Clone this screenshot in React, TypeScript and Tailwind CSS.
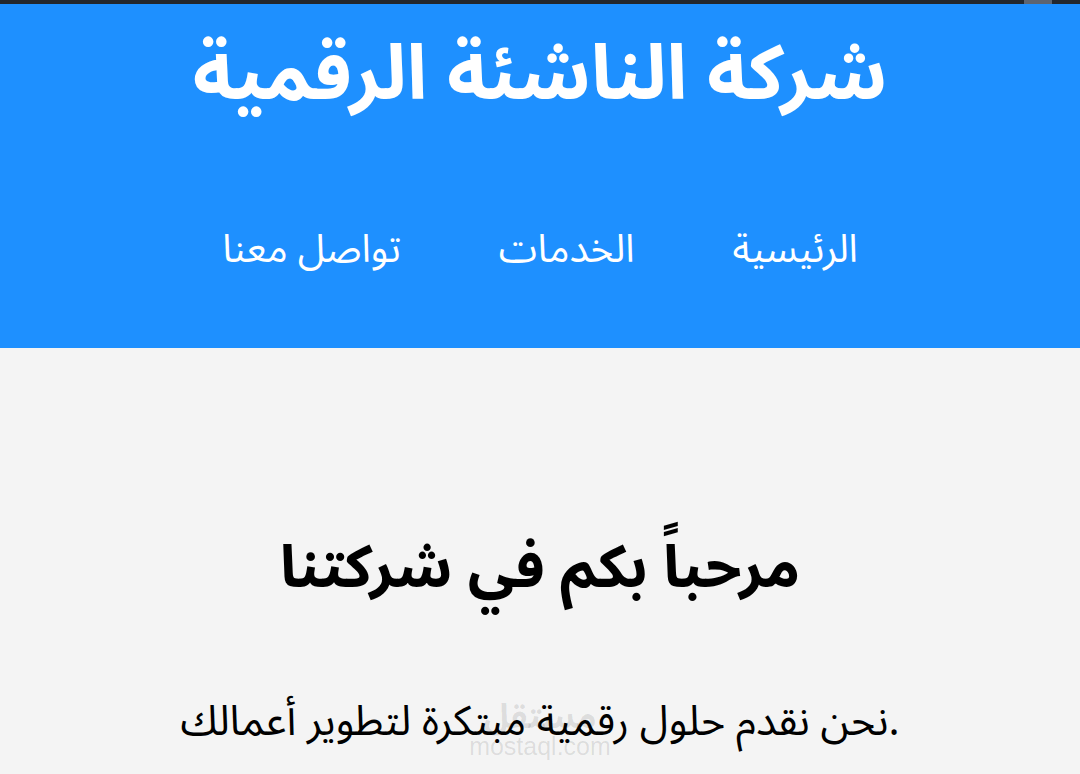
export default function App() {
  const links = ["تواصل معنا", "الخدمات", "الرئيسية"];
  return (
    <div className="min-h-[774px] bg-[#f4f4f4] font-['Noto_Sans_Arabic',sans-serif] relative overflow-hidden">
      <div className="h-[4px] bg-[#23272d]" />
      <div className="absolute top-0 left-[1024px] w-[28px] h-[4px] bg-[#5d6470]" />
      <header className="bg-[#1e90ff] h-[344px] flex flex-col items-center text-white">
        <h1 className="mt-[18px] text-[76px] font-bold leading-[1.4]">شركة الناشئة الرقمية</h1>
        <nav className="mt-[95px] flex items-center gap-[98px] text-[39px] leading-[1.4]">
          {links.map((l) => (
            <a key={l} href="#">{l}</a>
          ))}
        </nav>
      </header>
      <main className="flex flex-col items-center text-black">
        <h2 className="mt-[180px] text-[59px] font-bold leading-[1.4]">مرحباً بكم في شركتنا</h2>
        <p className="mt-[82px] text-[41.5px] leading-[1.4]">نحن نقدم حلول رقمية مبتكرة لتطوير أعمالك.</p>
      </main>
      <div className="absolute left-[473px] top-[700px] w-[134px] flex flex-col items-center text-[#000]/10 pointer-events-none">
        <span className="text-[34px] font-bold leading-none">مستقل</span>
        <span className="text-[25px] leading-none font-['Liberation_Sans',sans-serif]">mostaql.com</span>
      </div>
    </div>
  );
}
